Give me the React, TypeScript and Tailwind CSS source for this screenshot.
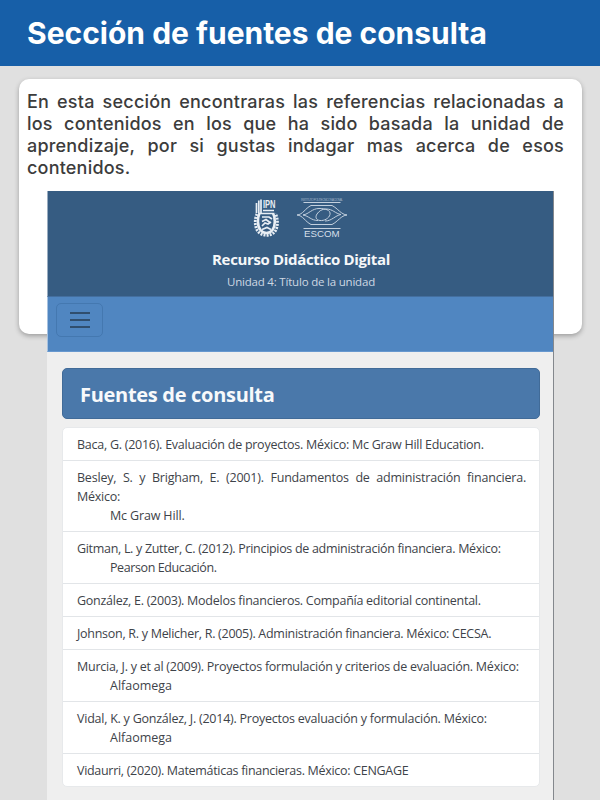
import React from "react";

type Line = { text: string; tracking: string };
type Reference = { lines: Line[]; tail?: Line; spread?: boolean; height: string };

const references: Reference[] = [
  {
    lines: [{ text: "Baca, G. (2016). Evaluación de proyectos. México: Mc Graw Hill Education.", tracking: "tracking-[-0.26px]" }],
    height: "h-[33px]",
  },
  {
    lines: [
      { text: "Besley, S. y Brigham, E. (2001). Fundamentos de administración financiera.", tracking: "tracking-[-0.2px]" },
      { text: "México:", tracking: "tracking-[-0.26px]" },
    ],
    tail: { text: "Mc Graw Hill.", tracking: "tracking-[-0.15px]" },
    spread: true,
    height: "h-[71px]",
  },
  {
    lines: [{ text: "Gitman, L. y Zutter, C. (2012). Principios de administración financiera. México:", tracking: "tracking-[-0.31px]" }],
    tail: { text: "Pearson Educación.", tracking: "tracking-[-0.4px]" },
    height: "h-[52px]",
  },
  {
    lines: [{ text: "González, E. (2003). Modelos financieros. Compañía editorial continental.", tracking: "tracking-[-0.26px]" }],
    height: "h-[33px]",
  },
  {
    lines: [{ text: "Johnson, R. y Melicher, R. (2005). Administración financiera. México: CECSA.", tracking: "tracking-[-0.28px]" }],
    height: "h-[33px]",
  },
  {
    lines: [{ text: "Murcia, J. y et al (2009). Proyectos formulación y criterios de evaluación. México:", tracking: "tracking-[-0.25px]" }],
    tail: { text: "Alfaomega", tracking: "tracking-[0px]" },
    height: "h-[52px]",
  },
  {
    lines: [{ text: "Vidal, K. y González, J. (2014). Proyectos evaluación y formulación. México:", tracking: "tracking-[-0.24px]" }],
    tail: { text: "Alfaomega", tracking: "tracking-[0px]" },
    height: "h-[52px]",
  },
  {
    lines: [{ text: "Vidaurri, (2020). Matemáticas financieras. México: CENGAGE", tracking: "tracking-[-0.3px]" }],
    height: "h-[32px]",
  },
];

function IpnLogo() {
  return (
    <svg className="h-[40px] w-[26px]" viewBox="0 0 26 40" fill="none" stroke="#e8eef4">
      <path
        d="M4 16C1.500 21 1.500 29 5 33.500c4 5 13 5 17 0 3.500-5 3-13 .5-18"
        strokeWidth="2.800"
        strokeDasharray="2 1.100"
      />
      <path d="M6.500 15C4.500 20 4 28 7.500 32c3 4 9 4 12 0 3-4 3-12 .5-17" strokeWidth="2.600" />
      <path d="M3.500 5v10M5.800 2.500V15M8 1.500V15" strokeWidth="1.700" />
      <path d="M6 15.500h14M9 19h7l3 2M9 23.500l4-2 4 3M9 28l3-3 3 1 3-2M9 31.500l5-2 4 2" strokeWidth="1.700" />
      <text x="10" y="10" fill="#e8eef4" stroke="none" className="font-['Liberation_Sans'] text-[10px] font-bold" textLength="12.500" lengthAdjust="spacingAndGlyphs">
        IPN
      </text>
      <path d="M10 12.500h11" strokeWidth="1.500" />
    </svg>
  );
}

function EscomLogo() {
  return (
    <svg className="h-[40px] w-[52px]" viewBox="0 0 52 40" fill="none" stroke="#c3d0de">
      <text x="5" y="2.500" fill="#9db1c7" stroke="none" className="font-['Liberation_Sans'] text-[3px]" textLength="42">
        INSTITUTO POLITECNICO NACIONAL
      </text>
      <path d="M7.500 4.500h37M7.500 30.500h37" />
      <path d="M1 17C7 16.500 9 10.500 15 7.500h21C42 10.500 45 16.500 51 17c-6 .5-9 6.500-15 9.500H15C9 23.500 7 17.500 1 17Z" />
      <path d="M22 22.500c-7 0-9-4.500-15-5.500 6-1 9-6.500 16-6.500 6 0 12 1.500 11 6-1 4-6 6.500-10 6-4-.5-5-3.500-3-6.500s5-5 9-5c7 0 9 4.500 15 5.500-6 1-9 6.500-16 6.500" />
      <text x="8" y="38.800" fill="#d5dfe9" stroke="none" className="font-['Liberation_Sans'] text-[9px]" textLength="35.500" lengthAdjust="spacingAndGlyphs">
        ESCOM
      </text>
    </svg>
  );
}

function Preview() {
  return (
    <section className="ml-[28px] mt-3 flex h-[609px] w-[507px] shrink-0 flex-col border-r-[1.500px] border-[#84888d] bg-[#efefef] font-['Open_Sans','Noto_Sans',sans-serif]">
      <header className="flex h-[106px] shrink-0 flex-col items-center border-b border-l border-b-[#446f9f] border-l-[#9aadc0] bg-[#365c82]">
        <div className="flex h-[55px] items-start gap-[17px] pr-px pt-[7px]">
          <IpnLogo />
          <EscomLogo />
        </div>
        <h2 className="h-[26px] whitespace-nowrap pl-px text-[15px] font-bold leading-[26px] tracking-[-0.35px] text-[#f5f7f9]">
          Recurso Didáctico Digital
        </h2>
        <p className="whitespace-nowrap pl-px text-[11.5px] leading-[19px] tracking-[-0.2px] text-[#ced8e2]">
          Unidad 4: Título de la unidad
        </p>
      </header>
      <nav className="flex h-[55px] shrink-0 items-start border-b border-l border-b-[#6798cf] border-l-[#a7c2e0] bg-[#5086c1] pl-[8px] pt-[6px]">
        <button className="flex h-[34px] w-[47px] flex-col items-center justify-center gap-[5px] rounded-[5px] border border-[#4478b0]">
          <span className="h-[2px] w-5 bg-[#304e6e]" />
          <span className="h-[2px] w-5 bg-[#304e6e]" />
          <span className="h-[2px] w-5 bg-[#304e6e]" />
        </button>
      </nav>
      <main className="pl-[15px] pt-4">
        <h3 className="flex h-[51px] w-[478px] items-center rounded-[5px] border border-[#416b98] bg-[#4a78aa] pl-[17px] pt-[2px] text-[20px] font-bold tracking-[-0.3px] text-[#f7f9fb]">
          Fuentes de consulta
        </h3>
        <ul className="mt-2 w-[478px] overflow-hidden rounded-[5px] border border-[#e7e9eb] bg-white text-[12.5px] leading-[19px] text-[#3e4349]">
          {references.map((item, i) => (
            <li
              key={i}
              className={`${item.height} border-b border-[#e2e5e8] pl-[14px] pt-[7px] whitespace-nowrap last:border-b-0`}
            >
              {item.lines.map((line, j) => (
                <p
                  key={j}
                  className={`${line.tracking} ${item.spread && j === 0 ? "w-[449px] [text-align-last:justify]" : ""}`}
                >
                  {line.text}
                </p>
              ))}
              {item.tail && <p className={`pl-[33px] ${item.tail.tracking}`}>{item.tail.text}</p>}
            </li>
          ))}
        </ul>
      </main>
    </section>
  );
}

export default function App() {
  return (
    <div className="h-[800px] w-[600px] overflow-hidden bg-[#e0e0e0] font-['Inter',sans-serif]">
      <header className="flex h-[66px] items-center bg-[#175fa8] pl-[27px] pt-px">
        <h1 className="whitespace-nowrap text-[30px] font-bold text-white">
          Sección de fuentes de consulta
        </h1>
      </header>
      <article className="ml-[19px] mt-[13px] h-[255px] w-[563px] rounded-[10px] bg-white pt-3 shadow-[0_2px_5px_rgba(0,0,0,0.3)]">
        <p className="ml-2 h-[88px] w-[537px] text-justify text-[18px] font-medium leading-[22px] tracking-[0.2px] text-[#3c3c3c]">
          En esta sección encontraras las referencias relacionadas a los contenidos en los que ha sido basada la unidad
          de aprendizaje, por si gustas indagar mas acerca de esos contenidos.
        </p>
        <Preview />
      </article>
    </div>
  );
}
